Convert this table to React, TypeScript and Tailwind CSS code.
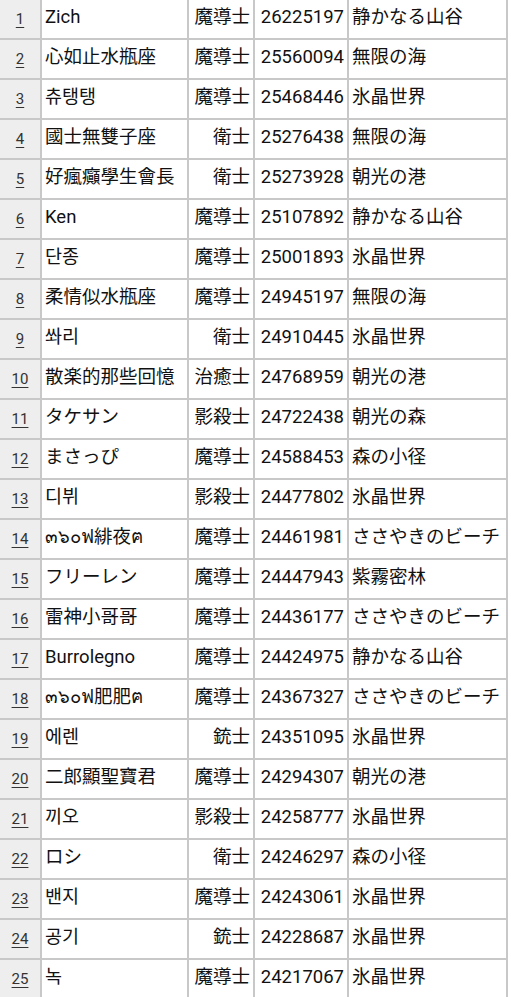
import React from "react";

type Row = [string, string, string, string];

const rows: Row[] = [
  ["Zich", "魔導士", "26225197", "静かなる山谷"],
  ["心如止水瓶座", "魔導士", "25560094", "無限の海"],
  ["츄탱탱", "魔導士", "25468446", "氷晶世界"],
  ["國士無雙子座", "衛士", "25276438", "無限の海"],
  ["好瘋癲學生會長", "衛士", "25273928", "朝光の港"],
  ["Ken", "魔導士", "25107892", "静かなる山谷"],
  ["단종", "魔導士", "25001893", "氷晶世界"],
  ["柔情似水瓶座", "魔導士", "24945197", "無限の海"],
  ["쏴리", "衛士", "24910445", "氷晶世界"],
  ["散楽的那些回憶", "治癒士", "24768959", "朝光の港"],
  ["タケサン", "影殺士", "24722438", "朝光の森"],
  ["まさっぴ", "魔導士", "24588453", "森の小径"],
  ["디뷔", "影殺士", "24477802", "氷晶世界"],
  ["๓๖๐ฟ緋夜ฅ", "魔導士", "24461981", "ささやきのビーチ"],
  ["フリーレン", "魔導士", "24447943", "紫霧密林"],
  ["雷神小哥哥", "魔導士", "24436177", "ささやきのビーチ"],
  ["Burrolegno", "魔導士", "24424975", "静かなる山谷"],
  ["๓๖๐ฟ肥肥ฅ", "魔導士", "24367327", "ささやきのビーチ"],
  ["에렌", "銃士", "24351095", "氷晶世界"],
  ["二郎顯聖寶君", "魔導士", "24294307", "朝光の港"],
  ["끼오", "影殺士", "24258777", "氷晶世界"],
  ["ロシ", "衛士", "24246297", "森の小径"],
  ["밴지", "魔導士", "24243061", "氷晶世界"],
  ["공기", "銃士", "24228687", "氷晶世界"],
  ["녹", "魔導士", "24217067", "氷晶世界"],
];

export default function App() {
  return (
    <div
      className="w-[511px] bg-white text-[#111]"
      style={{ fontFamily: "Roboto, 'Noto Sans CJK JP', 'Noto Sans CJK KR', 'DejaVu Sans', sans-serif" }}
    >
      <div className="w-[508px]">
        {rows.map((r, i) => (
          <div key={i} className="flex h-[40px] border-b-2 border-[#c8c8c8]">
            <div className="w-[42px] shrink-0 bg-[#eeeeee] border-r-2 border-[#c8c8c8] flex items-center justify-center">
              <span className="text-[15px] text-[#333] underline underline-offset-[3px] decoration-[1px] leading-none">
                {i + 1}
              </span>
            </div>
            <div className="w-[147px] shrink-0 border-r-2 border-[#c8c8c8] pl-[3px] flex items-center pb-[3px] text-[18.5px] leading-none whitespace-nowrap overflow-hidden">
              {r[0]}
            </div>
            <div className="w-[66px] shrink-0 border-r-2 border-[#c8c8c8] pr-[3px] flex items-center justify-end pb-[3px] text-[18.5px] leading-none whitespace-nowrap">
              {r[1]}
            </div>
            <div className="w-[94px] shrink-0 border-r-2 border-[#c8c8c8] pr-[3px] flex items-center justify-end pb-[3px] text-[18.5px] leading-none whitespace-nowrap">
              {r[2]}
            </div>
            <div className="w-[159px] shrink-0 border-r-2 border-[#c8c8c8] pl-[3px] flex items-center pb-[3px] text-[18.5px] leading-none whitespace-nowrap overflow-hidden">
              {r[3]}
            </div>
          </div>
        ))}
      </div>
    </div>
  );
}
